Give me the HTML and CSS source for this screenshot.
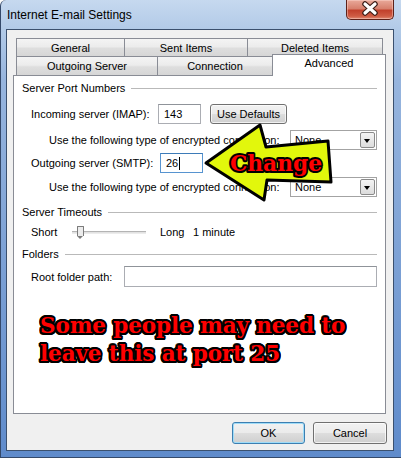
FILE: index.html
```html
<!DOCTYPE html>
<html lang="en">
  <head>
    <meta charset="UTF-8" />
    <title>Internet E-mail Settings</title>
    <link rel="stylesheet" href="styles.css">
  </head>
  <body>
    <div class="window">
      <div class="titlebar">
        <span class="title">Internet E-mail Settings</span>
        <span class="close">
          <svg width="48" height="20" viewBox="0 0 48 20">
            <path d="M19 5 L29 14 M29 5 L19 14" stroke="#3b1c16" stroke-width="5.5" stroke-linecap="round" />
            <path d="M19 5 L29 14 M29 5 L19 14" stroke="#fff" stroke-width="3.2" stroke-linecap="round" />
          </svg>
        </span>
      </div>
      <div class="client">
        <div class="tabs">
          <div class="tab-row back">
            <span class="tab t-general">General</span>
            <span class="tab t-sent">Sent Items</span>
            <span class="tab t-deleted">Deleted Items</span>
          </div>
          <div class="tab-row front">
            <span class="tab t-outgoing">Outgoing Server</span>
            <span class="tab t-connection">Connection</span>
            <span class="tab t-advanced selected">Advanced</span>
          </div>
        </div>
        <div class="panel">
          <div class="group g-ports"><span>Server Port Numbers</span><i class="rule"></i></div>

          <div class="row r-incoming">
            <span class="label l-incoming">Incoming server (IMAP):</span>
            <span class="field f-port">143</span>
            <span class="button b-defaults">Use Defaults</span>
          </div>
          <div class="row r-enc1 sub">
            <span class="label">Use the following type of encrypted connection:</span>
            <span class="select">None<b class="drop"></b></span>
          </div>
          <div class="row r-outgoing">
            <span class="label l-outgoing">Outgoing server (SMTP):</span>
            <span class="field f-port focused">26<i class="caret"></i></span>
          </div>
          <div class="row r-enc2 sub">
            <span class="label">Use the following type of encrypted connection:</span>
            <span class="select">None<b class="drop"></b></span>
          </div>

          <div class="group g-timeouts"><span>Server Timeouts</span><i class="rule"></i></div>
          <div class="row r-timeout">
            <span class="label l-short">Short</span>
            <span class="slider"><i class="track"></i><i class="thumb"></i></span>
            <span class="label l-long">Long</span>
            <span class="label">1 minute</span>
          </div>

          <div class="group g-folders"><span>Folders</span><i class="rule"></i></div>
          <div class="row r-root">
            <span class="label l-root">Root folder path:</span>
            <span class="field f-root"></span>
          </div>

          <p class="note">Some people may need to<br>leave this at port 25</p>
        </div>
        <div class="buttons">
          <span class="button b-ok">OK</span>
          <span class="button b-cancel">Cancel</span>
        </div>
      </div>

      <svg class="arrow" width="140" height="90" viewBox="0 0 140 90">
        <polygon points="6,43 60,5 66,27 128,21 131,62 67,60 64,80" fill="#e2f70c" stroke="#000" stroke-width="3" stroke-linejoin="round" />
        <text x="76" y="51" text-anchor="middle" textLength="92" lengthAdjust="spacingAndGlyphs" class="change">Change</text>
      </svg>
    </div>
  </body>
</html>
```

FILE: styles.css
```css
* {
  box-sizing: border-box;
}
body {
  margin: 0;
  background: #fff;
  font: 11px "Liberation Sans", Arial, sans-serif;
  color: #000;
}
.window {
  position: relative;
  width: 401px;
  height: 458px;
  display: flex;
  flex-direction: column;
  padding: 0 7px 6px 5px;
  border-left: 1px solid #34496a;
  border-bottom: 1px solid #34496a;
  border-top-left-radius: 6px;
  background: linear-gradient(to bottom, #c6d9ef 0, #b3cbe8 28px, #97b5de 80px, #5f8bcb 100%);
  box-shadow: 0 2px 3px rgba(0, 0, 0, 0.45);
}
.titlebar {
  height: 29px;
  display: flex;
  justify-content: space-between;
  align-items: flex-start;
}
.title {
  margin: 8px 0 0 1px;
  font-size: 12px;
  color: #000;
}
.close {
  width: 48px;
  height: 20px;
  border: 1px solid #5d2119;
  border-top: none;
  border-radius: 0 0 5px 5px;
  background: linear-gradient(to bottom, #e9a99a 0, #d7806d 45%, #c2412c 55%, #cf5c44 85%, #e08a72 100%);
  box-shadow: inset 0 0 0 1px rgba(255, 220, 210, 0.45);
}
.close svg {
  display: block;
  margin: -1px 0 0 -1px;
}
.client {
  flex: 1;
  display: flex;
  flex-direction: column;
  padding: 8px 7px 6px 6px;
  border: 1px solid #3b506e;
  background: #f0f0f0;
}

/* tabs */
.tabs {
  margin-left: 3px;
}
.tab-row {
  display: flex;
}
.back {
  height: 18px;
}
.front {
  height: 19px;
}
.tab {
  display: flex;
  align-items: center;
  justify-content: center;
  border: 1px solid #898c95;
  border-bottom: none;
  margin-left: -1px;
  background: linear-gradient(to bottom, #f4f4f4 0, #ececec 45%, #dedede 55%, #d6d6d6 100%);
}
.tab:first-child {
  margin-left: 0;
}
.t-general { width: 109px; }
.t-sent { width: 124px; }
.t-deleted { width: 136px; }
.t-outgoing { width: 142px; }
.t-connection { width: 116px; }
.t-advanced { width: 114px; }
.tab.selected {
  position: relative;
  z-index: 1;
  height: 22px;
  margin-top: -2px;
  align-items: flex-start;
  padding-top: 2px;
  background: #fff;
}

/* panel */
.panel {
  height: 339px;
  padding: 4px 8px 0 8px;
  border: 1px solid #898c95;
  background: #fff;
}
.group {
  display: flex;
  align-items: center;
  height: 16px;
}
.rule {
  flex: 1;
  height: 1px;
  margin-left: 6px;
  background: #b9b9b9;
}
.g-timeouts { margin-top: 7px; }
.g-folders { margin-top: 4px; }
.row {
  display: flex;
  align-items: center;
  height: 20px;
  padding-left: 9px;
}
.row.sub {
  justify-content: space-between;
  padding-left: 27px;
}
.r-incoming { margin-top: 8px; }
.r-enc1 { margin-top: 6px; }
.r-outgoing { margin-top: 3px; }
.r-enc2 { margin-top: 4px; }
.r-timeout { margin-top: 2px; }
.r-root { margin-top: 4px; height: 21px; }
.l-incoming { width: 127px; }
.l-outgoing { width: 129px; }
.l-short { width: 41px; }
.l-long { width: 33px; margin-left: 14px; }
.l-root { width: 93px; }

.field {
  display: flex;
  align-items: center;
  height: 100%;
  padding-left: 5px;
  border: 1px solid #abadb3;
  border-top-color: #8f9399;
  background: #fff;
}
.f-port { width: 43px; }
.f-root { flex: 1; }
.field.focused {
  border-color: #5794d0;
  border-top-color: #3d7bb8;
}
.caret {
  width: 1px;
  height: 13px;
  margin-left: 1px;
  background: #000;
}
.button {
  display: flex;
  align-items: center;
  justify-content: center;
  height: 100%;
  border: 1px solid #707070;
  border-radius: 3px;
  background: linear-gradient(to bottom, #f2f2f2 0, #ebebeb 48%, #dddddd 52%, #cfcfcf 100%);
  box-shadow: inset 0 0 0 1px rgba(255, 255, 255, 0.7);
}
.b-defaults {
  width: 77px;
  margin-left: 9px;
}
.select {
  position: relative;
  display: flex;
  align-items: center;
  width: 87px;
  height: 100%;
  padding-left: 4px;
  border: 1px solid #a3a3a3;
  background: #fff;
}
.drop {
  position: absolute;
  right: 1px;
  top: 1px;
  width: 15px;
  height: 16px;
  border: 1px solid #8a8a8a;
  border-radius: 2px;
  background: linear-gradient(to bottom, #f4f4f4, #dcdcdc);
}
.drop::after {
  content: "";
  position: absolute;
  left: 3px;
  top: 6px;
  border-left: 3.5px solid transparent;
  border-right: 3.5px solid transparent;
  border-top: 4px solid #000;
}
.slider {
  position: relative;
  width: 74px;
  height: 14px;
}
.track {
  position: absolute;
  left: 0;
  right: 0;
  top: 6px;
  height: 3px;
  border-top: 1px solid #b4b4b4;
  border-bottom: 1px solid #ececec;
  background: #e2e2e2;
}
.thumb {
  position: absolute;
  left: 5px;
  top: 1px;
  width: 7px;
  height: 10px;
  border: 1px solid #7c7c7c;
  border-bottom: none;
  border-radius: 1px 1px 0 0;
  background: #ececec;
}
.thumb::after {
  content: "";
  position: absolute;
  left: -1px;
  top: 9px;
  border-left: 3.5px solid transparent;
  border-right: 3.5px solid transparent;
  border-top: 3px solid #7c7c7c;
}
.note {
  margin: 25px 0 0 18px;
  font: bold 21.5px/28px "DejaVu Serif", "Liberation Serif", serif;
  letter-spacing: -0.1px;
  color: #f00;
  text-shadow: 2px 0 #000, -2px 0 #000, 0 2px #000, 0 -2px #000,
    1.5px 1.5px #000, -1.5px 1.5px #000, 1.5px -1.5px #000, -1.5px -1.5px #000,
    2px 1px #000, -2px 1px #000, 2px -1px #000, -2px -1px #000,
    1px 2px #000, -1px 2px #000, 1px -2px #000, -1px -2px #000;
}

/* footer */
.buttons {
  display: flex;
  justify-content: flex-end;
  gap: 8px;
  height: 22px;
  margin: 8px -1px 0 0;
}
.b-ok {
  width: 73px;
  border-color: #3c7fb1;
  box-shadow: inset 0 0 0 1px #9fdcf8;
}
.b-cancel {
  width: 74px;
}

/* overlay */
.arrow {
  position: absolute;
  left: 199px;
  top: 120px;
}
.change {
  font: bold 23px "DejaVu Serif", serif;
  fill: #f00;
  stroke: #000;
  stroke-width: 4px;
  stroke-linejoin: round;
  paint-order: stroke fill;
}
```
